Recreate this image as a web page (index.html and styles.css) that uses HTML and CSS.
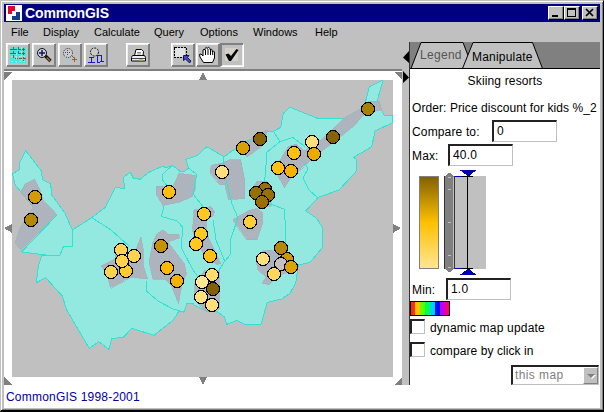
FILE: index.html
```html
<!DOCTYPE html>
<html lang="en">
<head>
<meta charset="utf-8">
<title>CommonGIS</title>
<link rel="stylesheet" href="styles.css">
</head>
<body>
<div class="window">
  <header class="titlebar">
    <svg class="logo" width="16" height="16" viewBox="0 0 16 16" shape-rendering="crispEdges"><path fill="#fff" d="M0 0h16v16H0z"/><path fill="#e8002c" d="M2 1h7v5H6v3H2z"/><path fill="#123c94" d="M10 7h4v8H6v-4h4z"/></svg>
    <h1>CommonGIS</h1>
    <div class="controls">
      <button class="wbtn" aria-label="Minimize"><svg width="12" height="11" shape-rendering="crispEdges"><path d="M3 8h6v2H3z"/></svg></button>
      <button class="wbtn" aria-label="Maximize"><svg width="12" height="11" shape-rendering="crispEdges"><path fill-rule="evenodd" d="M2 1h9v9H2zM3 3v6h7V3z"/></svg></button>
      <button class="wbtn last" aria-label="Close"><svg width="12" height="11"><path d="M3 2l7 7m0-7l-7 7" stroke="#000" stroke-width="1.7"/></svg></button>
    </div>
  </header>
  <nav class="menu"><span>File</span><span>Display</span><span>Calculate</span><span>Query</span><span>Options</span><span>Windows</span><span>Help</span></nav>
  <main class="body">
    <section class="left">
      <div class="toolbar">
        <button class="tool t1" aria-label="Map extent"><svg width="20" height="20" viewBox="0 0 20 20" shape-rendering="crispEdges"><path fill="#40e8e8" d="M2 2h16v16H2z"/><path fill="none" stroke="#6a6428" stroke-dasharray="3 1" d="M2 4.500h16M5.500 2v12M10.500 2v8M15.500 3v14M2 8.500h15M7 13.500h11"/><path fill="none" stroke="#c8d8d8" stroke-dasharray="2 2" d="M3 11.500h15M3 16.500h14M8.500 8v10M13.500 2v15"/></svg></button>
        <button class="tool t2" aria-label="Zoom in"><svg width="20" height="20" viewBox="0 0 20 20"><circle cx="8" cy="8" r="4.500" fill="#d0d0e0" stroke="#111"/><path d="M5 8h6M8 5v6" stroke="#14145c" stroke-width="1.500"/><path d="M11.500 11l5 5" stroke="#111" stroke-width="3.200"/><path d="M12.800 12.500l3.200 3.200" stroke="#c06830" stroke-width="1.300"/></svg></button>
        <button class="tool t3" aria-label="Zoom out"><svg width="20" height="20" viewBox="0 0 20 20"><circle cx="8" cy="8" r="4.500" fill="#ccc" stroke="#222" stroke-dasharray="1 1"/><path d="M5 7.500h6M7.500 5v6" stroke="#44447c" stroke-dasharray="1 1"/><path d="M12 11l2 2" stroke="#333" stroke-dasharray="1 1"/><path d="M12 14.500h5M14.500 12v5" stroke="#a85c20"/></svg></button>
        <button class="tool t4" aria-label="Zoom to layer"><svg width="20" height="20" viewBox="0 0 20 20"><circle cx="8.500" cy="7" r="4" fill="#ccc" stroke="#111" stroke-dasharray="2 1"/><g shape-rendering="crispEdges"><path d="M3 12.500h5M5.500 13v4M2 17.500h7M11.500 17v-7h4v6M11 17.500h3M14 16.500h4" fill="none" stroke="#1818d0"/></g></svg></button>
        <button class="tool t5" aria-label="Print"><svg width="20" height="20" viewBox="0 0 20 20"><path d="M6.500 10.500L8 4.500h5.500l2 2-.5 4" fill="#fff" stroke="#000"/><path d="M9 7.500h4M9 9h4" stroke="#888"/><path d="M4.500 10.500h12l1 2v3.500H3.500v-3.500z" fill="#eee" stroke="#000"/><path d="M4 13.500h13" stroke="#444"/><path d="M11 14h4v1.500h-4z" fill="#c8d800"/></svg></button>
        <button class="tool t6" aria-label="Select area"><svg width="20" height="20" viewBox="0 0 20 20"><path fill="#e4e4e4" d="M2 3h10v9H2z"/><path fill="none" stroke="#000" stroke-dasharray="2 1" d="M1.500 2.500h12v10h-12z" shape-rendering="crispEdges"/><path d="M10.500 10.500h5.500l-1.500 2 3.500 3.500-1.500 2-4-4-2 1.500z" fill="#4848d0" stroke="#001" stroke-width=".8"/></svg></button>
        <button class="tool t7" aria-label="Pan"><svg width="20" height="20" viewBox="0 0 20 20"><path d="M5.500 17.500L2 12 1.500 9.500 3 9l2 2V5q1-1.500 2 0V3.500q1-2 2.300 0V3q1.500-1.500 2.700.5v1q1.700-1 2.200.5v1.500q1.800-1 2.300.5v6l-2 4.500z" fill="#fff" stroke="#000"/><path d="M7.500 5v5M10 4v6M12.500 4v6M14.700 6v4" stroke="#000"/></svg></button>
        <button class="tool on t8" aria-label="Select"><svg width="20" height="20" viewBox="0 0 20 20"><path fill="#d4d0c8" d="M3 3h13v13H3z"/><path d="M3.500 9.500l3-1L9 11l5.500-7 2 1L9 16H7z"/></svg></button>
      </div>
      <svg class="map" width="398" height="314" viewBox="4 71 398 314" shape-rendering="crispEdges">
        <defs><pattern id="speck" width="4" height="4" patternUnits="userSpaceOnUse"><path fill="#b0b5bd" d="M0 0h4v4H0z"/><path fill="#a2b2c4" d="M0 0h1v1H0zM2 2h1v1H2z"/></pattern></defs>
        <path fill="#fff" d="M4 71h398v314H4z"/>
        <path fill="#c0c0c0" d="M12 80h381v297H12z"/>
        <g fill="#808080"><path d="M4 72h8l-8 8zM394 72h8v8zM4 377l8 8H4zM402 377v8h-8zM203 72l4 8h-8zM199 377h8l-4 8zM4 228l8-4v9zM393 224l8 4-8 5z"/></g>
        <g fill="#93e8df" stroke="#2fe3d4" stroke-linejoin="round">
          <path d="M25.700 150.700L19.700 162.700 19 170 12.500 173.700 15.300 185 20.700 191.700 33 207 57 215 21.500 252 59.700 256.700 63.300 246.700H72.300V230L65 213.300 51.700 195 50.700 184 42.700 180 41.300 171z"/>
          <path d="M72.300 230L91.700 217.700 105 207.700 115 187.700 124.300 188.300 123.700 177.300 130.300 172 133.300 178 140 179.300 150 171.700 163.300 166 166 168 172.300 165.300 180 171.300 185 171 188.700 168 185.700 159.300 197.300 155.700 206.700 146.700 224 156.700 236.700 147.700 260 133.300 266.700 131 273.300 131.300 280.700 127.300 283.300 113.300 290 107.300 317.300 118.300H344.300L361.700 108.300 365.300 102.300 369.300 86.700 383 80 377.300 100.700 384 115 392.300 115.700 392.500 122.700 375 131 371.700 146.700 353.700 157.300 357 160 356 171.700 339 190 318.300 197.300 305.700 211 316.700 218.300 322.700 228V247.300L310 262.300 298.300 265 295.700 282.700 290 293.300 281.700 299 267.300 302.300 261 324.300H244.300L237 320.300 226.700 324.300 224.300 316.700 217 311.700 206 311 194 305 193.300 303.300H186.700L184 312.300 179 311 173.300 320 154 335.300 131.700 328.300 123.300 337.300 111.700 338.700 109 349.300 98.700 341.700 89.300 348.300 66.700 310 62.300 296 45.700 277.700 36.300 282.700 38.300 266.700 41.700 255.700H59.700L63.300 246.700H72.300z"/>
        </g>
        <g fill="url(#speck)" stroke="#a8aebb" stroke-width=".7">
          <path d="M20.700 191.700L25 184 34.700 179.300 40 190 43 200 56.700 214.300 21 250 15 243 20 228 33 207z"/>
          <path d="M156 186.500L173 186 179 173.300 195.500 175.500 195 190 192 196.500 180 202 163 205.500 156 194z"/>
          <path d="M211 165.500L222 163 230 159.500H240.700L244.500 178 245 198.500 228.500 199.500 225 184.500 220 184.500 210 172.500z"/>
          <path d="M241 148L257 134 268 130 261 147 247 157z"/>
          <path d="M194 210L211 206.500 214.500 211 213 216 206 220V232L212 245 220.500 263.500 217 264.500 205 257 198.500 245 192.500 231z"/>
          <path d="M233 219.500L249 210.500 257 208.500 263 213 262.500 224 257 239.500H247z"/>
          <path d="M279 161L288 146.500 296 144 304 151 321 140 329 132.500 344 118.300 361.700 108.300 369 101 379.500 101.500 382 110 366 112 355 125 339 138 322 151 304 166 291.500 177 284.500 187.500 278 176z"/>
          <path d="M250 193L257 181 268 182 272 195 271 206 262 206z"/>
          <path d="M156 234.500L163 230 168 234 179 234.500V238L168 242 174 250 184.500 264 186.500 274 182 284 178.500 303.500 171.500 286 165 279 153 279 149 262 153 242z"/>
          <path d="M117 248L126 256 133 256 141 237 143 248 143.500 266 147.500 279 131 277 110.500 288 107 273 101 266 115 259z"/>
          <path d="M195 283L205 270 219 270V309L205 311 194 299z"/>
          <path d="M256 259L263 251 271 250 276 253 287 247 289 262 293 270 276 277 269 285 262 283 266 277 258 270z"/>
        </g>
        <path fill="none" stroke="#2fe3d4" stroke-linejoin="round" d="M92 217.700L111 230 129 246M172 165.500L163 174 162 179 170 190M188.500 168L196 174V178L193 194 204 208M164 206L161.500 216.500 177 221 182.500 227 181.500 248 193 270 200 280M224 156.500L223 168 232 204 238 218 230 241V255L224.500 261.500 216 275 213 291M213 220L216 240 225 262M273.500 131.500L280 141.500 293 137.500 305 146.500M280 141.500L266 153 266 165 264 190M305 163L308 169 303 178 309 190 318 198M264 190L270 204 284 209 285 220 285 249 295 265M146.500 281V291L158 301 173 309 184 312"/>
        <g stroke="#000" fill="#ffc010">
          <circle cx="368" cy="109" r="6.500" fill="#a88000"/><circle cx="333" cy="137" r="6.500" fill="#886400"/><circle cx="260" cy="139" r="6.500" fill="#886400"/><circle cx="243" cy="148" r="6.500" fill="#d8a000"/>
          <circle cx="312" cy="142" r="6.500" fill="#ffe07c"/><circle cx="314" cy="154" r="6.500" fill="#eaaa00"/><circle cx="294" cy="153" r="6.500"/><circle cx="278" cy="168" r="6.500"/><circle cx="291" cy="171" r="6.500" fill="#f4b100"/>
          <circle cx="222" cy="172" r="6.500" fill="#ffe07c"/><circle cx="169" cy="192" r="6.500" fill="#ffbe08"/><circle cx="35" cy="197" r="6.500" fill="#d39b00"/><circle cx="31" cy="220" r="6.500" fill="#b48800"/>
          <circle cx="265" cy="189" r="6.500" fill="#987000"/><circle cx="256" cy="193" r="6.500" fill="#987000"/><circle cx="268" cy="195" r="6.500" fill="#987000"/><circle cx="262" cy="202" r="6.500" fill="#987000"/>
          <circle cx="204" cy="214" r="6.500" fill="#ffc820"/><circle cx="250" cy="222" r="6.500" fill="#ffcf38"/><circle cx="201" cy="234" r="6.500" fill="#ffc820"/><circle cx="196" cy="244" r="6.500" fill="#ffc820"/><circle cx="210" cy="256" r="6.500"/>
          <circle cx="161" cy="246" r="6.500" fill="#c49200"/><circle cx="167" cy="268" r="6.500" fill="#ffb800"/><circle cx="177" cy="281" r="6.500" fill="#f4b100"/>
          <circle cx="121" cy="250" r="6.500" fill="#ffd34d"/><circle cx="134" cy="256" r="6.500" fill="#ffd34d"/><circle cx="126" cy="271" r="6.500" fill="#ffcb2e"/><circle cx="111" cy="272" r="6.500" fill="#ffd34d"/><circle cx="122" cy="261" r="6.500" fill="#ffd34d"/>
          <circle cx="212" cy="275" r="6.500" fill="#ffdc6c"/><circle cx="202" cy="282" r="6.500" fill="#ffe694"/><circle cx="213" cy="289" r="6.500" fill="#806000"/><circle cx="201" cy="297" r="6.500" fill="#ffe07c"/><circle cx="212" cy="305" r="6.500" fill="#ffe07c"/>
          <circle cx="263" cy="259" r="6.500" fill="#ffe07c"/><circle cx="287" cy="259" r="6.500" fill="#d09800"/><circle cx="281" cy="248" r="6.500" fill="#b88800"/><circle cx="281" cy="264" r="6.500" fill="#c4c0c4"/><circle cx="291" cy="267" r="6.500" fill="#dda300"/><circle cx="274" cy="274" r="6.500" fill="#ffd75c"/>
        </g>
      </svg>
    </section>
    <div class="splitter"><svg width="7" height="44" viewBox="0 0 7 44"><path d="M7 9v12L1 15.500zM1 29v12l6-5.500z"/></svg></div>
    <aside class="panel">
      <div class="tabs">
        <svg class="tabshape" width="190" height="27" viewBox="0 0 190 27"><path fill="#c0c0c0" stroke="#000" d="M1 26.500L11 .5H53L63 26.500"/><path fill="#c0c0c0" stroke="#000" d="M52.500 26.500L63 .5H122.500L132.500 26.500"/><path stroke="#000" d="M0 26.500h190"/></svg>
        <span class="tab legend">Legend</span><span class="tab manipulate">Manipulate</span>
      </div>
      <h2>Skiing resorts</h2>
      <p class="order">Order: Price discount for kids %_2</p>
      <label class="field compare"><span>Compare to:</span><input value="0"></label>
      <label class="field max"><span>Max:</span><input value="40.0"></label>
      <svg class="scale" width="90" height="106" viewBox="410 170 90 106" shape-rendering="crispEdges">
        <defs><linearGradient id="gold" x2="0" y2="1"><stop stop-color="#806000"/><stop offset=".5" stop-color="#ffc000"/><stop offset="1" stop-color="#ffe694"/></linearGradient></defs>
        <path fill="url(#gold)" stroke="#808080" d="M419.500 176.500h19v92h-19z"/>
        <path fill="#c0c0c0" d="M444 176h42v93h-42z"/>
        <path stroke="#333" d="M444.500 176v93M454.500 176v93"/>
        <path fill="#808080" d="M445 176l4-3h1l4 3v93l-4 3h-1l-4-3z"/>
        <path stroke="#c0c0c0" d="M448 177.500h3M448 189.500h3M448 222.500h3M448 255.500h3M448 267.500h3M453.500 177v91"/>
        <path stroke="#0000c0" d="M455 176.500h12M455 268.500h12"/>
        <path fill="#0000b0" d="M459.500 170h17l-8 6.500zM459.500 275h17l-8-6.500z"/>
        <path stroke="#000" d="M467.500 176v93M462 176.500h11M462 268.500h11"/>
      </svg>
      <label class="field min"><span>Min:</span><input value="1.0"></label>
      <svg class="rainbow" width="40" height="15" viewBox="0 0 40 15" shape-rendering="crispEdges"><path d="M0 0h40v15H0z"/><path fill="#ff3000" d="M1 1h4v13H1z"/><path fill="#ffc000" d="M5 1h5v13H5z"/><path fill="#60ff00" d="M10 1h5v13h-5z"/><path fill="#00ff50" d="M15 1h5v13h-5z"/><path fill="#00d0ff" d="M20 1h5v13h-5z"/><path fill="#0010ff" d="M25 1h5v13h-5z"/><path fill="#c000ff" d="M30 1h5v13h-5z"/><path fill="#ff0070" d="M35 1h4v13h-4z"/></svg>
      <label class="check"><i></i><span>dynamic map update</span></label>
      <label class="check second"><i></i><span>compare by click in</span></label>
      <div class="select"><span>this map</span><b><svg width="10" height="8" viewBox="0 0 10 8"><path fill="#fff" d="M2 3h8L6 7z"/><path fill="#808080" d="M1 2h8L5 6z"/></svg></b></div>
    </aside>
  </main>
  <footer>CommonGIS 1998-2001</footer>
</div>
</body>
</html>
```
FILE: styles.css
```css
* { box-sizing: border-box; }
body { margin: 0; font: 11px/20px "Liberation Sans", Arial, sans-serif; color: #000; overflow: hidden; }
.window { width: 604px; height: 412px; display: flex; flex-direction: column; background: #c0c0c0; border: 1px solid #c0c0c0; border-right: 1px solid #000; border-bottom: 2px solid #000; box-shadow: inset 1px 1px #fff, inset -1px -1px #808080; padding: 3px; }
.titlebar { height: 18px; display: flex; align-items: center; background: #000080; color: #fff; padding: 0 2px; }
h1 { margin: 0 auto 0 3px; font-size: 14px; line-height: 18px; letter-spacing: -.1px; }
.controls { display: flex; }
button { padding: 0; background: #c0c0c0; }
.wbtn { width: 16px; height: 14px; border: 1px solid; border-color: #fff #000 #000 #fff; box-shadow: inset -1px -1px #808080; display: flex; }
.wbtn svg { display: block; }
.wbtn.last { margin-left: 2px; }
.menu { height: 20px; display: grid; grid-template-columns: 32px 51px 60px 46px 53px 62px auto; padding-left: 7px; }
.body { height: 343px; display: flex; }
.left { width: 398px; }
.toolbar { height: 29px; display: flex; padding-top: 1px; border-bottom: 2px solid #808080; }
.tool { width: 24px; height: 24px; margin-left: 2px; border: 1px solid; border-color: #fff #808080 #808080 #fff; box-shadow: inset -1px -1px #808080, inset 1px 1px #f0f0f0; display: grid; place-items: center; }
.tool svg { display: block; }
.t5 { margin-left: 18px; }
.t6 { margin-left: 21px; }
.t7, .t8 { margin-left: 0; }
.t7 { margin-left: 1px; }
.tool.on { border-color: #808080 #fff #fff #808080; box-shadow: inset 1px 1px #808080, inset -1px -1px #f0f0f0; }
.map { display: block; }
.splitter { width: 8px; border-right: 1px solid #333; }
.splitter svg { display: block; }
.panel { width: 190px; background: #fff; font-size: 12px; letter-spacing: .08px; }
.tabs { display: flex; position: relative; height: 27px; background: #808080; }
.tabshape { position: absolute; left: 0; top: 0; }
.tab { position: relative; line-height: 27px; }
.legend { margin-left: 10px; width: 52px; color: #555; letter-spacing: .3px; }
.manipulate { padding-top: 2px; letter-spacing: .2px; }
h2 { margin: 2px 0 0; font: 12px/20px "Liberation Sans", Arial, sans-serif; text-align: center; letter-spacing: .15px; }
.order { margin: 8px 0 0 2px; line-height: 18px; white-space: nowrap; }
.field { display: flex; height: 21px; margin: 3px 0 0 2px; line-height: 24px; }
.field span { width: 80px; letter-spacing: .15px; }
.max span { width: 36px; }
.min { margin-top: 2px; }
.min span { width: 34px; }
input { width: 65px; height: 22px; border: 2px solid; border-width: 2px 1px 1px 2px; border-color: #222 #c0c0c0 #c0c0c0 #222; padding: 0 3px 2px; font: 12px "Liberation Sans", Arial, sans-serif; letter-spacing: .2px; }
.scale { display: block; margin-top: 5px; }
.rainbow { display: block; margin-top: 2px; }
.check { display: flex; gap: 5px; height: 23px; margin-top: 3px; line-height: 18px; letter-spacing: .2px; }
.check i { width: 15px; height: 15px; border: 2px solid; border-width: 2px 1px 1px 2px; border-color: #222 #c0c0c0 #c0c0c0 #222; }
.second { margin-top: 0; letter-spacing: .08px; }
.select { display: flex; justify-content: space-between; width: 88px; height: 20px; margin-left: 101px; border: 2px solid; border-width: 2px 1px 1px 2px; border-color: #222 #c0c0c0 #c0c0c0 #222; color: #808080; line-height: 16px; padding-left: 2px; letter-spacing: .4px; }
.select b { width: 15px; background: #c0c0c0; border: 1px solid; border-color: #fff #808080 #808080 #fff; display: grid; place-items: center; }
footer { height: 23px; background: #fff; color: #0000a0; font-size: 12px; line-height: 24px; padding-left: 2px; letter-spacing: .2px; }
```
